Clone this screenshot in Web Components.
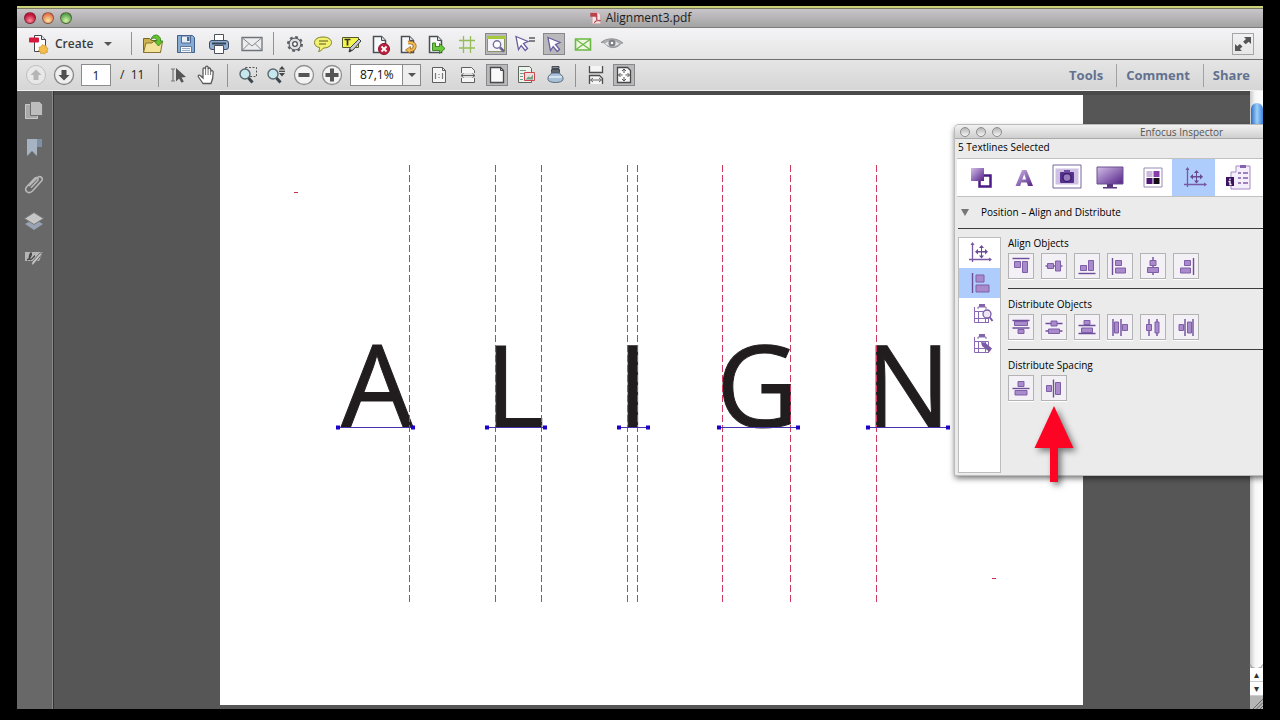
<!DOCTYPE html>
<html lang="en">
<head>
<meta charset="utf-8">
<title>Alignment3.pdf</title>
<style>
  html, body { margin: 0; height: 100%; }
  body {
    box-sizing: border-box;
    min-height: 100%;
    padding: 6px 17px 11px;
    display: flex;
    background: #000;
    overflow: hidden;
    font-family: "Open Sans", "Noto Sans", sans-serif;
  }
</style>
</head>
<body>
  <pdf-window></pdf-window>

<script>
  // Every icon is drawn on a 22x22 grid.
  const PAGE = '<path d="M5.5 3.5h8l4 4v12h-12z" fill="#f6f8fa" stroke="#4b4f55" stroke-width="1.5"/><path d="M13.5 3.5v4h4" fill="#d3d8dd" stroke="#4b4f55"/>';
  const LENS = '<circle cx="8" cy="10" r="5" fill="#c5e8ee" stroke="#5b666e" stroke-width="1.4"/><path d="M11.5 14l4 4.5" stroke="#3e464d" stroke-width="3"/>';
  const MOVE = 'M14 4l2.5 3h-2v3h3V8l3 2.7-3 2.8v-2h-3v3h2L14 17.500l-2.500-3h2v-3h-3v2l-3-2.800L10.500 8v2h3V7h-2z';
  const P = 'fill="#a98bcb" stroke="#7e5ea9"';
  const L = 'stroke="#6d4d99" stroke-width="1.4"';
  const BOXES = '<path d="M4.500 5v15.500H19M4.500 9.500H18.500V20M8.500 9.500V20M15.500 9.500V20M4.500 16.500h14" fill="none" stroke="#8a6ab2"/><path d="M9 2h6v3H9z" fill="#8465ac"/><path d="M8 7V5h8v2" stroke="#8a6ab2" fill="none"/>';

  const ICONS = {
    create: '<path d="M7.500 2.500h7l4 4v12h-11z" fill="#fff" stroke="#42464c"/><path d="M14.500 2.500v4h4" fill="#dde0e4" stroke="#42464c"/><rect x="2" y="4.500" width="10" height="5" rx="1" fill="#d61a3c"/><path d="M15.500 11.500l1.500 1.300 2-.3.300 2 1.700 1-1 1.700.500 2-2 .300-1 1.600-1.800-1-1.900.600-.600-1.900-1.700-1 1-1.700-.500-1.900 2-.300z" fill="#f5bd4a" stroke="#c78c28" stroke-width=".7"/>',
    folder: '<path d="M1.500 5.500h6l2 2h9v12h-17z" fill="#cbb24f" stroke="#776628"/><path d="M4 10h6l1.500-1.500H20.500L18.500 19.500h-17z" fill="#f3e29a" stroke="#857434"/><path d="M9 6.500C10 1.500 16 0 18.500 5.500V8h2.500l-4.500 5L12 8h2.700C14.500 5 12 4 9 6.500z" fill="#63c32e" stroke="#367a1c" stroke-width=".8"/>',
    save: '<path d="M2.500 2.500h15l2 2v15h-17z" fill="#87acd3" stroke="#40608c"/><path d="M6.500 3h9v7h-9z" fill="#e6eef7" stroke="#4d6a92"/><path d="M12 4h2.500v4H12z" fill="#49658c"/><path d="M5.500 13.500h11v6h-11z" fill="#f7fafd" stroke="#61799b"/><path d="M7 15.500h8M7 17.500h8" stroke="#98acc4"/>',
    print: '<path d="M6.500 1.500h9v7h-9z" fill="#fff" stroke="#4c5259"/><rect x="1.500" y="7.500" width="19" height="9" rx="2.500" fill="#8fadd0" stroke="#3f4d60"/><path d="M4 10.500h14" stroke="#344458" stroke-width="2"/><path d="M6.500 12.500h9v8h-9z" fill="#fff" stroke="#4c5259"/>',
    mail: '<path d="M1 4.500h20v13H1z" fill="#ecedef" stroke="#70747a" stroke-width="1.300"/><path d="M1.500 5l9.500 8L20.500 5M1.500 17L8 10.500M20.500 17L14 10.500" fill="none" stroke="#84888e"/>',
    gear: '<circle cx="11" cy="11" r="5.800" fill="#d8dade" stroke="#5b5e63" stroke-width="1.300"/><circle cx="11" cy="11" r="7" fill="none" stroke="#5b5e63" stroke-width="2" stroke-dasharray="2.800 2.700"/><circle cx="11" cy="11" r="5.300" fill="#dfe1e4"/><circle cx="11" cy="11" r="2.300" fill="#fff" stroke="#4c4f54" stroke-width="1.300"/>',
    bubble: '<path d="M11 4c5 0 8.500 2.200 8.500 5.500S16 15 11.500 15c-1 1.500-2.500 3-5 3.500.8-1 1.200-2.300 1-4C4 13.800 2.500 12 2.500 9.500 2.500 6.200 6 4 11 4z" fill="#f2f171" stroke="#7d7d28"/><path d="M7 8h9M7 11h7" stroke="#8b8b35" stroke-width="1.300"/>',
    highlight: '<path d="M2.500 4.500h16v10h-16z" fill="#f5f54f" stroke="#55582b"/><path d="M4.500 6.500h6M7.500 6.500v6" stroke="#303025" stroke-width="1.700"/><path d="M19 6l2 2-8 9-4 2 1-4z" fill="#c6cbd0" stroke="#3d4146"/><path d="M9 19l1.500-3 1.500 1.500z" fill="#2c2c2c"/>',
    pagex: PAGE + '<circle cx="16" cy="16" r="5.500" fill="#c2203e" stroke="#87142a"/><path d="M13.500 13.500l5 5m0-5l-5 5" stroke="#fff" stroke-width="1.800"/>',
    pagerot: PAGE + '<path d="M12 9.500c6-.5 8 3 6 6-1 1.500-2.500 2-4.500 2" fill="none" stroke="#a06a1c" stroke-width="3.500"/><path d="M14.500 13.500v7l-5-3.500z" fill="#f4bd55" stroke="#a06a1c" stroke-width=".8"/><path d="M12 9.500c6-.5 8 3 6 6-1 1.500-2.500 2-4.500 2" fill="none" stroke="#f4bd55" stroke-width="2"/>',
    pagego: PAGE + '<path d="M8.500 10h3v3.500h4V10.500l5.500 5-5.500 5V17.500h-7z" fill="#6dc93c" stroke="#347c1f" stroke-width=".9"/>',
    grid: '<path d="M7.500 3v17M14.500 3v17M3 7.500h16M3 15h16" stroke="#94bd55" stroke-width="1.300"/>',
    preview: '<path d="M2.500 4.500h17v14h-17z" fill="#f4f4f8" stroke="#8c9460"/><path d="M2 3h18v3H2z" fill="#a6c83d"/><circle cx="12" cy="11.500" r="3.700" fill="#fff" stroke="#74709c" stroke-width="1.400"/><path d="M15 14.500l4 4" stroke="#6a6595" stroke-width="2.500"/>',
    cursoreq: '<path d="M2 3.500l12 5-4.500 2 4 5-2.300 2-4-5-2.700 4z" fill="#fff" stroke="#675da0" stroke-width="1.300"/><path d="M15 5h6M15 8h6" stroke="#5c5c66" stroke-width="1.300"/>',
    cursor: '<path d="M5 4.500l12 5-4.500 2 4 5-2.300 2-4-5L7.500 17.500z" fill="#fff" stroke="#675da0" stroke-width="1.300"/>',
    envgreen: '<path d="M3.500 6h15v11h-15z" fill="#eef7df" stroke="#6ab846" stroke-width="1.600"/><path d="M4 6.500l14 10M18 6.500l-14 10" stroke="#6ab846" stroke-width="1.300"/>',
    eye: '<path d="M0 9.500C5 5 15 4 22 10c-1.500 0-2 .5-3 1.500-4 4.500-11 4-14.500-.500C3 9.500 2 9.500 0 9.500z" fill="#aeb1b4" stroke="#919497"/><path d="M4 10.500c4-3 9-3 14 0-4 3.500-10 3.500-14 0z" fill="#e7e8e9"/><circle cx="11" cy="10" r="3.500" fill="#7d8084"/><circle cx="11" cy="10" r="1.300" fill="#fff"/>',
    full: '<path d="M12 4h7v7l-2.300-2.300-3 2.600-2.600-2.600 2.900-2.700zM10 18H3v-7l2.300 2.300 2.500-2.300 2.700 2.600-2.600 2.500z" fill="#555"/>',
    up: '<circle cx="11" cy="11" r="9.500" fill="#e8e8e8" stroke="#bfbfbf"/><path d="M11 5.500l5.500 5.500h-3v5h-5v-5h-3z" fill="#b5b5b5"/>',
    down: '<circle cx="11" cy="11" r="9.500" fill="#efefef" stroke="#868686" stroke-width="1.300"/><path d="M11 16.500l5.500-5.500h-3V6h-5v5h-3z" fill="#4f4f4f"/>',
    select: '<path d="M3 5h4M5 5v12M3 17h4" stroke="#777" stroke-width="1.200"/><path d="M8 4l10 9-4.500.5 2.300 4-2.300 1.200-2.500-4.200L8 17.500z" fill="#555"/>',
    hand: '<path d="M7 19.500L2.500 13c-1-1.700.8-2.500 2-1.300L7 14V5.500C7 3.500 9.300 3.500 9.500 5.200V3.500c.2-1.800 2.500-1.800 2.600 0V5c.4-1.500 2.500-1.300 2.500.5v2c.6-1.500 2.600-1.200 2.600.5 0 4 0 7-2.200 11.500z" fill="#fff" stroke="#5a5a5a" stroke-width="1.300"/><path d="M9.600 5v6M12.100 5v6M14.600 6v5" stroke="#777"/>',
    marquee: '<path d="M8.500 3.500h11v9h-11z" fill="none" stroke="#555" stroke-dasharray="2 1.500"/>' + LENS,
    zoomdyn: LENS + '<path d="M17 2l3 3.500h-6zM17 12.500l3-3.500h-6z" fill="#444"/><path d="M14 7.300h6" stroke="#444" stroke-width="1.300"/>',
    minus: '<circle cx="11" cy="11" r="9.500" fill="#f3f3f3" stroke="#909090" stroke-width="1.300"/><path d="M5.500 9h11v4h-11z" fill="#555"/>',
    plus: '<circle cx="11" cy="11" r="9.500" fill="#f3f3f3" stroke="#909090" stroke-width="1.300"/><path d="M9 4.500h4V9h4.500v4H13v4.500H9V13H4.500V9H9z" fill="#555"/>',
    actual: '<path d="M4.500 3.500h10l3 3v12h-13z" fill="#f5f5f5" stroke="#5f5f5f"/><path d="M14.500 3.500v3h3" fill="none" stroke="#5f5f5f"/><path d="M7.500 9v6M14.500 9v6M11 10v1M11 13v1" stroke="#777" stroke-width="1.200"/>',
    fitwidth: '<path d="M4.500 9V3.500h10l3 3V9M4.500 14v4.500h13V14" fill="#f5f5f5" stroke="#5f5f5f"/><path d="M4 11.500h14M6.500 9.500l-2.500 2 2.500 2M15.500 9.500l2.500 2-2.500 2" fill="none" stroke="#5f5f5f"/>',
    fitpage: '<path d="M4.500 3.500h10l3 3v12h-13z" fill="#fafafa" stroke="#484848" stroke-width="1.300"/><path d="M14.500 3.500v3h3" fill="none" stroke="#484848"/>',
    pageimg: '<path d="M3.500 2.500h11l2 2v14h-13z" fill="#eef3ee" stroke="#5f665f"/><path d="M5 6.500h6M5 9.500h4M5 12.500h3M5 15.500h3" stroke="#6aa384"/><path d="M9.500 8.500h10v8h-10z" fill="#e8e0df" stroke="#d04450"/><path d="M10.500 15.500l3-3 2 1 2.500-3v5z" fill="#73a486"/>',
    ink: '<path d="M8 2.500h7v2H8z" fill="#8a929b" stroke="#454b52"/><path d="M7.500 5.500h8v3h-8z" fill="#5d646c" stroke="#454b52"/><path d="M8 9c-3 2-4.500 4-4 6.500.5 4 14.500 4 15 0 .4-2.500-1-4.500-4-6.500z" fill="#a8c1d8" stroke="#5b6c7e"/><path d="M5 13h13" stroke="#e5eef6" stroke-width="1.500"/>',
    scroll: '<path d="M4.500 2v6.500h13V2M4.500 20v-8.500h10l3 3V20" fill="#f5f5f5" stroke="#4c4c4c" stroke-width="1.300"/><path d="M5.500 16h11M8 14l-2.500 2L8 18M14 14l2.500 2-2.500 2" fill="none" stroke="#666"/>',
    fitall: '<path d="M4.500 3.500h10l3 3v12h-13z" fill="#fafafa" stroke="#484848" stroke-width="1.300"/><path d="M11 5v4M9 7l2-2 2 2M11 17v-4M9 15l2 2 2-2M5.500 11h4M7.500 9l-2 2 2 2M16.500 11h-4M14.500 9l2 2-2 2" fill="none" stroke="#555"/>',

    pages: '<path d="M2.500 5.500h12v14h-12z" fill="#a9a9a9" stroke="#c8c8c8"/><path d="M7.500 2.500h9l3 3v11h-12z" fill="#bdbdbd" stroke="#6e6e6e"/>',
    bookmark: '<path d="M9 3h10v8h-10z" fill="#7d90a5"/><path d="M4 3h10v17l-5-5-5 5z" fill="#a5b3c3"/>',
    clip: '<path d="M6 13l8-8c3-3 7 0 4.500 3l-9 10c-3.500 3.500-9 0-6-4l8-8.500c2-2 5 0 3 2.300l-6.500 7" fill="none" stroke="#b8b8b8" stroke-width="1.600"/>',
    layers: '<path d="M2 14l9-5 9 5-9 6z" fill="#98a3b3"/><path d="M1.500 8.500L11 2.500l9.500 6L11 14.500z" fill="#c6c6c6" stroke="#777"/>',
    sign: '<path d="M2 5h18l-4 9H2z" fill="#b5b5b5"/><path d="M4 13c4-1 5-7 4-7s-3 7-.5 6.500S11 9 12 9" fill="none" stroke="#444" stroke-width="1.300"/><path d="M20 6l-9 11-3 2 1-4 8-9z" fill="#c6c6c6" stroke="#666"/>',

    attop: `<path d="M2.500 3.500h17" ${L}/><path d="M4.500 6.500h6v6h-6zM12.500 6.500h5v11h-5z" ${P}/>`,
    atmid: `<path d="M2.500 11h17" ${L}/><path d="M4.500 8.500h6v5h-6zM12.500 6h5v10h-5z" ${P}/>`,
    atbot: `<path d="M2.500 18.500h17" ${L}/><path d="M4.500 10.500h6v5h-6zM12.500 5.500h5v10h-5z" ${P}/>`,
    atleft: `<path d="M3.500 3v17" ${L}/><path d="M6.500 5.500h6v5h-6zM6.500 13h10v5h-10z" ${P}/>`,
    atcen: `<path d="M11 2v18" ${L}/><path d="M8 5.500h6v5h-6zM5.500 12.500h11v5h-11z" ${P}/>`,
    atright: `<path d="M18.500 3v17" ${L}/><path d="M9.500 5.500h6v5h-6zM5.500 13h10v5h-10z" ${P}/>`,
    dtop: `<path d="M2.500 4.500h17M2.500 12h17" ${L}/><path d="M4.500 5.500h13v4h-13zM8 13.500h6v4H8z" ${P}/>`,
    dmid: `<path d="M2.500 7.500h17M2.500 15h17" ${L}/><path d="M8 5h6v5H8zM5.500 13h11v4.500h-11z" ${P}/>`,
    dbot: `<path d="M2.500 9.500h17M2.500 17.500h17" ${L}/><path d="M8 4.500h6v4H8zM5.500 12h11v4.500h-11z" ${P}/>`,
    dleft: `<path d="M4 3v17M12 3v17" ${L}/><path d="M5.500 6h4v11h-4zM13.500 8.500h5v6h-5z" ${P}/>`,
    dcen: `<path d="M7 3v17M15 3v17" ${L}/><path d="M4.500 8.500h5v6h-5zM13 6h4v11h-4z" ${P}/>`,
    dright: `<path d="M10 3v17M18 3v17" ${L}/><path d="M4 8.500h4.500v6h-4.500zM12.500 6h4v11h-4z" ${P}/>`,
    sver: `<path d="M2.500 11.500h17" ${L}/><path d="M8 4.500h6v5H8zM5 13.500h12v4.500H5z" ${P}/>`,
    shor: `<path d="M10.500 2.500v18" ${L}/><path d="M3.500 8.500h5v6h-5zM12.500 5.500h5v12h-5z" ${P}/>`,

    axes: `<path d="M2.500 1v19M-1 17.500h22" stroke="#7858a5" stroke-width="1.300"/><path d="M22 17.500l-3-2v4zM2.500 0l-2 3h4z" fill="#7858a5"/><path d="${MOVE}" fill="#6b4a94" transform="translate(-2.500 -1)"/>`,
    alignbox: `<path d="M2.500 1v20" ${L}/><path d="M6 3h8v7H6zM6 13h13v7H6z" ${P}/>`,
    boxfind: BOXES + '<circle cx="17" cy="12" r="4" fill="#eee8f6" stroke="#7b5ba7" stroke-width="1.300"/><path d="M19.500 15l3 4" stroke="#7b5ba7" stroke-width="2"/>',
    boxedit: BOXES + '<path d="M11 10l4 .5 7 6-2.500 3.500-7.500-6z" fill="#7b5ba7"/>',

    stroke: '<path d="M9.500 8.500h11v11h-11z" fill="#fff" stroke="#4d1b85" stroke-width="2.500"/><path d="M1 1h13v13H1z" fill="url(#pg)"/>',
    letter: '<path d="M2.500 19L9 3h4.500l6.500 16h-5l-1.200-3.500H8.300L7.200 19zM9.300 12.500h3.800L11.200 7z" fill="url(#pg)" fill-rule="evenodd"/>',
    camera: '<path d="M-3-2h28v23h-28z" fill="#fff" stroke="#77679a"/><path d="M-.5 1.500h23v16h-23z" fill="#cfc1e4"/><rect x="4" y="5" width="14" height="11" rx="1" fill="#55308c"/><path d="M8 3h6v3H8z" fill="#6e4ca0"/><circle cx="11" cy="10.500" r="4" fill="#967bbd" stroke="#3c1c6c" stroke-width="1.300"/>',
    screen: '<path d="M-2 0h26v17h-26z" fill="url(#pg)" stroke="#6a518f"/><path d="M8 17h6v3h4v1.500H4V20h4z" fill="#5a347f"/>',
    swatch: '<path d="M2 1h18v19H2z" fill="#fff" stroke="#9a8bb5"/><path d="M4.500 4h6v6h-6z" fill="#cab9dd"/><path d="M11.500 4h6v6h-6z" fill="#8a3cab"/><path d="M4.500 11h6v6h-6z" fill="#4c1672"/><path d="M11.500 11h6v6h-6z" fill="#140a18"/>',
    checks: '<path d="M3 5h5V-1h14v23H3z" fill="#f4eefa" stroke="#a58bc6"/><path d="M12-2h6v3h-6z" fill="#8465ac"/><path d="M10 6h3M15 6h5M10 11h3M15 11h5M10 16h3M15 16h5" stroke="#7e5ea9" stroke-width="1.500"/><path d="M-2 10h8v9h-8z" fill="#3b1361"/><path d="M2 11.500v1.500M.5 14.500h1.500V17.500h1.500" stroke="#fff" stroke-width="1.300" fill="none"/>',
    pdf: '<path d="M5 2h9l4 4v14H5z" fill="#f4e4e5" stroke="#c99a9d"/><path d="M2 3h11v6H2z" fill="#b9424b"/><path d="M9 18c4-4 4-9 3-10s-1 4 1 6 5 2 5 1-6 0-10 3z" fill="none" stroke="#a83a44" stroke-width="1.300"/>'
  };

  const GRADIENT = '<defs><linearGradient id="pg" x1="0" y1="0" x2="1" y2="1"><stop offset="0" stop-color="#d2bfe8"/><stop offset="1" stop-color="#542088"/></linearGradient></defs>';

  class BaseElement extends HTMLElement {
    constructor() {
      super();
      this.attachShadow({ mode: "open" });
    }
  }

  class UiIcon extends BaseElement {
    connectedCallback() {
      const name = this.getAttribute("name");
      this.shadowRoot.innerHTML = `
        <style>
          :host { display: block; width: 22px; height: 22px; flex: none; }
          svg { display: block; width: 100%; height: 100%; overflow: visible; }
        </style>
        <svg viewBox="0 0 22 22" fill="none" aria-hidden="true">${GRADIENT}${ICONS[name] || ""}</svg>
      `;
    }
  }
  customElements.define("ui-icon", UiIcon);

  class ToolButton extends BaseElement {
    connectedCallback() {
      const icon = this.getAttribute("icon");
      const label = this.getAttribute("label");
      this.shadowRoot.innerHTML = `
        <style>
          :host { display: block; flex: none; }
          button {
            box-sizing: border-box;
            display: flex;
            align-items: center;
            justify-content: center;
            width: var(--w, 22px);
            height: var(--h, 22px);
            padding: 0 0 0 var(--inset, 0px);
            border: 0;
            background: none;
          }
          :host([pressed]) button {
            background: #b9b9bb;
            box-shadow: inset 0 0 0 1px #88888b;
          }
          :host([kind="boxed"]) button {
            border: 1px solid #b3b3b3;
            background: #f4f1f6;
            box-shadow: 0 1px 0 #fff;
          }
          :host([kind="tab"][pressed]) button {
            background: #aecdfc;
            box-shadow: none;
          }
        </style>
        <button type="button" aria-label="${label}"><ui-icon name="${icon}"></ui-icon></button>
      `;
    }
  }
  customElements.define("tool-button", ToolButton);

  class ToolBar extends BaseElement {
    constructor() {
      super();
      this.shadowRoot.innerHTML = `
        <style>
          :host {
            display: flex;
            align-items: center;
            box-sizing: border-box;
            height: 32px;
            gap: var(--gap, 10px);
            background: linear-gradient(#f4f4f6, #e4e4e4);
            border-bottom: 1px solid #6f6f6f;
          }
          :host([kind="second"]) {
            --gap: 7px;
            --sep: 2px;
            background: linear-gradient(#e5e5e5, #d6d6d6);
            border-bottom-color: #f2f2f2;
          }
          ::slotted(hr) {
            width: 1px;
            height: 23px;
            margin: 0 var(--sep, 0px);
            border: 0;
            background: #929292;
          }
          ::slotted(tool-group) { flex: none; }
        </style>
        <slot></slot>
      `;
    }
  }
  customElements.define("tool-bar", ToolBar);

  class ToolGroup extends BaseElement {
    constructor() {
      super();
      this.shadowRoot.innerHTML = `
        <style>
          :host { display: flex; align-items: center; gap: 6px; }
          :host([gap="7"]) { gap: 7px; }
          :host([gap="11"]) { gap: 11px; }
        </style>
        <slot></slot>
      `;
    }
  }
  customElements.define("tool-group", ToolGroup);

  class CreateButton extends BaseElement {
    constructor() {
      super();
      this.shadowRoot.innerHTML = `
        <style>
          :host { display: block; margin-left: 10px; }
          button {
            display: flex;
            align-items: center;
            width: 94px;
            padding: 0;
            border: 0;
            background: none;
            font: 600 12px/20px "Open Sans", sans-serif;
            color: #3b3b3b;
          }
          span { margin: 0 auto 0 6px; }
          i {
            margin-right: 9px;
            border: 4px solid transparent;
            border-top-color: #555;
            border-bottom: 0;
          }
        </style>
        <button type="button"><ui-icon name="create"></ui-icon><span>Create</span><i></i></button>
      `;
    }
  }
  customElements.define("create-button", CreateButton);

  class PageNumber extends BaseElement {
    constructor() {
      super();
      this.shadowRoot.innerHTML = `
        <style>
          :host { display: block; }
          label {
            display: flex;
            align-items: center;
            min-width: 68px;
            font-size: 12px;
            line-height: 20px;
            color: #222;
            white-space: pre;
          }
          input {
            box-sizing: border-box;
            width: 30px;
            height: 22px;
            margin-right: 9px;
            padding: 0;
            border: 1px solid #8b8b8b;
            background: #fff;
            font: inherit;
            text-align: center;
            color: #111;
          }
        </style>
        <label><input type="text" value="1" aria-label="Page">/  11</label>
      `;
    }
  }
  customElements.define("page-number", PageNumber);

  class ZoomSelect extends BaseElement {
    constructor() {
      super();
      this.shadowRoot.innerHTML = `
        <style>
          :host { display: block; position: relative; }
          select {
            display: block;
            box-sizing: border-box;
            width: 71px;
            height: 22px;
            padding: 0 0 0 9px;
            appearance: none;
            border: 1px solid #8b8b8b;
            border-radius: 0;
            background: linear-gradient(90deg, #fff 51px, #8b8b8b 51px, #8b8b8b 52px, #eee 52px);
            font: 12px/20px "Open Sans", sans-serif;
            color: #111;
          }
          /* drop-down arrow over the right part of the select */
          i {
            position: absolute;
            right: 5px;
            top: 9px;
            border: 4px solid transparent;
            border-top-color: #555;
            border-bottom: 0;
            pointer-events: none;
          }
        </style>
        <select aria-label="Zoom"><option>87,1%</option><option>100%</option><option>125%</option></select>
        <i></i>
      `;
    }
  }
  customElements.define("zoom-select", ZoomSelect);

  class TaskTabs extends BaseElement {
    constructor() {
      super();
      this.shadowRoot.innerHTML = `
        <style>
          :host { display: flex; margin-left: auto; }
          button {
            height: 23px;
            padding: 0 13px 0 9px;
            border: 0;
            border-right: 1px solid #a2a2a2;
            background: none;
            font: 700 13px/20px "Open Sans", sans-serif;
            color: #62718f;
          }
          button:last-child { border-right: 0; }
        </style>
        <button type="button">Tools</button>
        <button type="button">Comment</button>
        <button type="button">Share</button>
      `;
    }
  }
  customElements.define("task-tabs", TaskTabs);

  class NavPane extends BaseElement {
    constructor() {
      super();
      this.shadowRoot.innerHTML = `
        <style>
          :host {
            display: flex;
            flex-direction: column;
            align-items: center;
            gap: 15px;
            box-sizing: border-box;
            flex: none;
            width: 37px;
            padding: 8px 2px 0 0;
            background: #686868;
            border-right: 1px solid #333;
            box-shadow: inset -1px 0 0 #8a8a8a;
          }
        </style>
        <tool-button icon="pages" label="Page thumbnails"></tool-button>
        <tool-button icon="bookmark" label="Bookmarks"></tool-button>
        <tool-button icon="clip" label="Attachments"></tool-button>
        <tool-button icon="layers" label="Layers"></tool-button>
        <tool-button icon="sign" label="Signatures"></tool-button>
      `;
    }
  }
  customElements.define("nav-pane", NavPane);

  class PdfPage extends BaseElement {
    constructor() {
      super();
      // letter, text x, selection start, selection end
      const letters = [
        ["A", 121, 118, 193],
        ["L", 265, 267, 325],
        ["I", 397, 399, 428],
        ["G", 496, 499, 578],
        ["N", 645, 648, 728]
      ];
      const guides = [189, 275, 321, 407, 417, 502, 570, 656];

      const text = letters.map(([ch, x]) => `<text x="${x}" y="332">${ch}</text>`).join("");
      const lines = guides.map(x => `<path d="M${x}.5 70V508"/>`).join("");
      const bases = letters.map(([, , a, b]) => `<path d="M${a} 332.500H${b}"/>`).join("");
      const knobs = letters.map(([, , a, b]) => `<path d="M${a - 2} 330.500h4v4h-4zM${b - 2} 330.500h4v4h-4z"/>`).join("");

      this.shadowRoot.innerHTML = `
        <style>
          :host { display: block; background: #fff; }
          svg { display: block; width: 100%; height: 100%; }
          text {
            font: 114px "Open Sans", sans-serif;
            fill: #211d1e;
            stroke: #211d1e;
            stroke-width: 1px;
          }
          .guides { stroke: #cf3b5e; stroke-dasharray: 7 3; }
          .bases { stroke: #4632b0; stroke-width: 1px; }
          .knobs { fill: #1a00c8; }
        </style>
        <svg viewBox="0 0 863 610" preserveAspectRatio="xMinYMin meet">
          ${text}
          <g class="guides">${lines}</g>
          <path d="M74 97.500h4M772 483.500h4" stroke="#c2304f"/>
          <g class="bases">${bases}</g>
          <g class="knobs">${knobs}</g>
        </svg>
      `;
    }
  }
  customElements.define("pdf-page", PdfPage);

  class ScrollTrack extends BaseElement {
    constructor() {
      super();
      this.shadowRoot.innerHTML = `
        <style>
          :host {
            display: flex;
            flex-direction: column;
            flex: none;
            width: 13px;
            background: linear-gradient(90deg, #c9c9c9, #f6f6f6 5px, #fff);
          }
          .thumb {
            height: 150px;
            margin: 12px 0 auto 1px;
            border-radius: 6px;
            background: linear-gradient(90deg, #2f6dc4, #9dd0fb 50%, #3f86dd);
          }
          .end {
            height: 6px;
            border-radius: 0 0 6px 6px;
            box-shadow: 0 2px 1px #999;
          }
          button {
            height: 14px;
            padding: 0;
            border: 0;
            border-bottom: 1px solid #ccc;
            background: #fff;
            font: 10px/13px "DejaVu Sans", sans-serif;
            color: #333;
          }
          svg { display: block; background: #b5b5b5; }
        </style>
        <div class="thumb"></div>
        <div class="end"></div>
        <button type="button" aria-label="Scroll up">▴</button>
        <button type="button" aria-label="Scroll down">▾</button>
        <svg width="13" height="13"><path d="M3 13L13 3M6.500 13L13 6.500M10 13l3-3" stroke="#666"/></svg>
      `;
    }
  }
  customElements.define("scroll-track", ScrollTrack);

  class ButtonSection extends BaseElement {
    connectedCallback() {
      this.shadowRoot.innerHTML = `
        <style>
          :host {
            --w: 26px;
            --h: 26px;
            display: block;
            padding-bottom: 9px;
            border-bottom: 1px solid #3d3d3d;
            margin-bottom: 9px;
          }
          :host(:last-of-type) { border-bottom: 0; }
          h3 { margin: 0 0 3px; font-weight: 400; font-size: 10px; line-height: 13px; }
          div { display: flex; gap: 7px; }
        </style>
        <h3>${this.getAttribute("heading")}</h3>
        <div><slot></slot></div>
      `;
    }
  }
  customElements.define("button-section", ButtonSection);

  class InspectorPanel extends BaseElement {
    constructor() {
      super();
      this.shadowRoot.innerHTML = `
        <style>
          :host {
            display: block;
            box-sizing: border-box;
            width: 453px;
            padding-bottom: 2px;
            background: #ebebeb;
            box-shadow: 0 0 0 1px #bbb, 0 3px 6px rgba(0, 0, 0, .6);
            border-radius: 4px 4px 0 0;
            font-size: 10px;
            line-height: 14px;
            color: #000;
          }
          header {
            display: grid;
            grid-template-columns: 1fr auto 1fr;
            align-items: center;
            height: 13px;
            border-radius: 4px 4px 0 0;
            background: linear-gradient(#f1f1f1, #cfcfcf);
            border-bottom: 1px solid #aaa;
            color: #555;
          }
          .lights { display: flex; gap: 6px; padding-left: 5px; }
          .lights i {
            box-sizing: border-box;
            width: 10px;
            height: 10px;
            border: 1px solid #8d8d8d;
            border-radius: 50%;
            background: linear-gradient(#b5b5b5, #f5f5f5);
          }
          .status { margin: 0 0 3px 3px; padding: 1px 0; }
          nav {
            --w: 43px;
            --h: 37px;
            --inset: 4px;
            display: flex;
            margin-left: 2px;
            border: 1px solid #c1c1c1;
            border-left: 0;
            background: #fff;
          }
          h2 {
            display: flex;
            align-items: center;
            gap: 12px;
            margin: 0 0 0 3px;
            padding: 8px 0 9px 3px;
            border-bottom: 1px solid #3d3d3d;
            font-weight: 400;
            font-size: 10px;
            line-height: 14px;
          }
          h2 i { border: 4px solid transparent; border-top: 7px solid #777; border-bottom: 0; }
          .body { display: flex; gap: 7px; margin: 8px 0 0 3px; }
          aside {
            --w: 41px;
            --h: 30px;
            --inset: 2px;
            box-sizing: border-box;
            flex: none;
            width: 43px;
            min-height: 236px;
            border: 1px solid #bdbdbd;
            background: #fff;
          }
          .sections { flex: 1; }
          /* callout that points at the second spacing button */
          .arrow {
            position: absolute;
            left: 79px;
            top: 281px;
            filter: drop-shadow(3px 3px 3px rgba(0, 0, 0, .5));
          }
        </style>
        <header>
          <div class="lights"><i></i><i></i><i></i></div>
          <span>Enfocus Inspector</span>
        </header>
        <p class="status">5 Textlines Selected</p>
        <nav>
          <tool-button kind="tab" icon="stroke" label="Fill and stroke"></tool-button>
          <tool-button kind="tab" icon="letter" label="Text"></tool-button>
          <tool-button kind="tab" icon="camera" label="Image"></tool-button>
          <tool-button kind="tab" icon="screen" label="Prepress"></tool-button>
          <tool-button kind="tab" icon="swatch" label="Separations"></tool-button>
          <tool-button kind="tab" icon="axes" label="Position" pressed></tool-button>
          <tool-button kind="tab" icon="checks" label="Summary"></tool-button>
        </nav>
        <h2><i></i>Position – Align and Distribute</h2>
        <div class="body">
          <aside>
            <tool-button kind="tab" icon="axes" label="Position"></tool-button>
            <tool-button kind="tab" icon="alignbox" label="Align and distribute" pressed></tool-button>
            <tool-button kind="tab" icon="boxfind" label="View page boxes"></tool-button>
            <tool-button kind="tab" icon="boxedit" label="Edit page boxes"></tool-button>
          </aside>
          <div class="sections">
            <button-section heading="Align Objects">
              <tool-button kind="boxed" icon="attop" label="Align top"></tool-button>
              <tool-button kind="boxed" icon="atmid" label="Align middle"></tool-button>
              <tool-button kind="boxed" icon="atbot" label="Align bottom"></tool-button>
              <tool-button kind="boxed" icon="atleft" label="Align left"></tool-button>
              <tool-button kind="boxed" icon="atcen" label="Align center"></tool-button>
              <tool-button kind="boxed" icon="atright" label="Align right"></tool-button>
            </button-section>
            <button-section heading="Distribute Objects">
              <tool-button kind="boxed" icon="dtop" label="Distribute top"></tool-button>
              <tool-button kind="boxed" icon="dmid" label="Distribute middle"></tool-button>
              <tool-button kind="boxed" icon="dbot" label="Distribute bottom"></tool-button>
              <tool-button kind="boxed" icon="dleft" label="Distribute left"></tool-button>
              <tool-button kind="boxed" icon="dcen" label="Distribute center"></tool-button>
              <tool-button kind="boxed" icon="dright" label="Distribute right"></tool-button>
            </button-section>
            <button-section heading="Distribute Spacing">
              <tool-button kind="boxed" icon="sver" label="Space vertically"></tool-button>
              <tool-button kind="boxed" icon="shor" label="Space horizontally"></tool-button>
            </button-section>
          </div>
        </div>
        <svg class="arrow" width="40" height="77"><path d="M20 0L39.500 42H24v34h-8V42H.500z" fill="#fd0424"/></svg>
      `;
    }
  }
  customElements.define("inspector-panel", InspectorPanel);

  class PdfWindow extends BaseElement {
    constructor() {
      super();
      this.shadowRoot.innerHTML = `
        <style>
          :host {
            display: flex;
            flex-direction: column;
            flex: 1;
            min-width: 0;
            overflow: hidden;
            box-sizing: border-box;
            border-top: 2px solid #c9d27a;
            background: #565656;
          }
          .title {
            display: grid;
            grid-template-columns: 1fr auto 1fr;
            align-items: center;
            box-sizing: border-box;
            height: 20px;
            background: linear-gradient(#c9c5c9, #a3a3a3);
            border-top: 1px solid #77795c;
            border-bottom: 1px solid #7d7d7d;
          }
          .lights { display: flex; gap: 6px; padding-left: 7px; }
          .lights i {
            box-sizing: border-box;
            width: 12px;
            height: 12px;
            border: 1px solid rgba(60, 30, 30, .5);
            border-radius: 50%;
            background: radial-gradient(circle at 50% 75%, #ff8f9c, #c1173b 65%);
          }
          .lights i:nth-child(2) { background: radial-gradient(circle at 50% 75%, #ffe9a0, #e0704a 75%); }
          .lights i:nth-child(3) { background: radial-gradient(circle at 50% 75%, #d3f5a5, #4f9c48 75%); }
          h1 {
            display: flex;
            align-items: center;
            gap: 3px;
            margin: 0;
            font-weight: 400;
            font-size: 12px;
            line-height: 16px;
            color: #1c1c1c;
          }
          h1 ui-icon { width: 14px; height: 14px; }
          .full {
            margin: 0 9px 0 auto;
            box-shadow: inset 0 0 0 1px #a5a5a5;
          }
          tool-bar[kind="second"] { height: 31px; }
          main {
            position: relative;
            display: flex;
            flex: 1;
            min-height: 0;
          }
          .doc {
            flex: 1;
            display: flex;
            padding: 4px 167px 4px 166px;
            box-shadow: inset 0 4px 0 #4a4a4a;
          }
          pdf-page { flex: 1; min-width: 0; }
          /* floating palette, partly off the right edge of the window */
          inspector-panel { position: absolute; top: 34px; right: -145px; }
        </style>
        <div class="title">
          <div class="lights"><i></i><i></i><i></i></div>
          <h1><ui-icon name="pdf"></ui-icon>Alignment3.pdf</h1>
        </div>
        <tool-bar>
          <create-button></create-button>
          <hr>
          <tool-group gap="11">
            <tool-button icon="folder" label="Open"></tool-button>
            <tool-button icon="save" label="Save"></tool-button>
            <tool-button icon="print" label="Print"></tool-button>
            <tool-button icon="mail" label="Mail"></tool-button>
          </tool-group>
          <hr>
          <tool-group>
            <tool-button icon="gear" label="Preferences"></tool-button>
            <tool-button icon="bubble" label="Sticky note"></tool-button>
            <tool-button icon="highlight" label="Highlight"></tool-button>
            <tool-button icon="pagex" label="Delete pages"></tool-button>
            <tool-button icon="pagerot" label="Rotate pages"></tool-button>
            <tool-button icon="pagego" label="Extract pages"></tool-button>
          </tool-group>
          <tool-group gap="7">
            <tool-button icon="grid" label="Grid"></tool-button>
            <tool-button icon="preview" label="Inspector" pressed></tool-button>
            <tool-button icon="cursoreq" label="Select similar"></tool-button>
            <tool-button icon="cursor" label="Select object" pressed></tool-button>
            <tool-button icon="envgreen" label="Wireframe"></tool-button>
            <tool-button icon="eye" label="Show"></tool-button>
          </tool-group>
          <tool-button class="full" icon="full" label="Full screen"></tool-button>
        </tool-bar>
        <tool-bar kind="second">
          <tool-group style="padding-left: 8px">
            <tool-button icon="up" label="Previous page"></tool-button>
            <tool-button icon="down" label="Next page"></tool-button>
            <page-number></page-number>
          </tool-group>
          <hr>
          <tool-group>
            <tool-button icon="select" label="Select"></tool-button>
            <tool-button icon="hand" label="Hand"></tool-button>
          </tool-group>
          <hr>
          <tool-group>
            <tool-button icon="marquee" label="Marquee zoom"></tool-button>
            <tool-button icon="zoomdyn" label="Dynamic zoom"></tool-button>
            <tool-button icon="minus" label="Zoom out"></tool-button>
            <tool-button icon="plus" label="Zoom in"></tool-button>
          </tool-group>
          <zoom-select></zoom-select>
          <tool-group gap="7">
            <tool-button icon="actual" label="Actual size"></tool-button>
            <tool-button icon="fitwidth" label="Fit width"></tool-button>
            <tool-button icon="fitpage" label="Fit page" pressed></tool-button>
            <tool-button icon="pageimg" label="Output preview"></tool-button>
            <tool-button icon="ink" label="Ink manager"></tool-button>
          </tool-group>
          <hr>
          <tool-group>
            <tool-button icon="scroll" label="Scrolling"></tool-button>
            <tool-button icon="fitall" label="One full page" pressed></tool-button>
          </tool-group>
          <task-tabs></task-tabs>
        </tool-bar>
        <main>
          <nav-pane></nav-pane>
          <div class="doc"><pdf-page></pdf-page></div>
          <scroll-track></scroll-track>
          <inspector-panel></inspector-panel>
        </main>
      `;
    }
  }
  customElements.define("pdf-window", PdfWindow);
</script>
</body>
</html>
